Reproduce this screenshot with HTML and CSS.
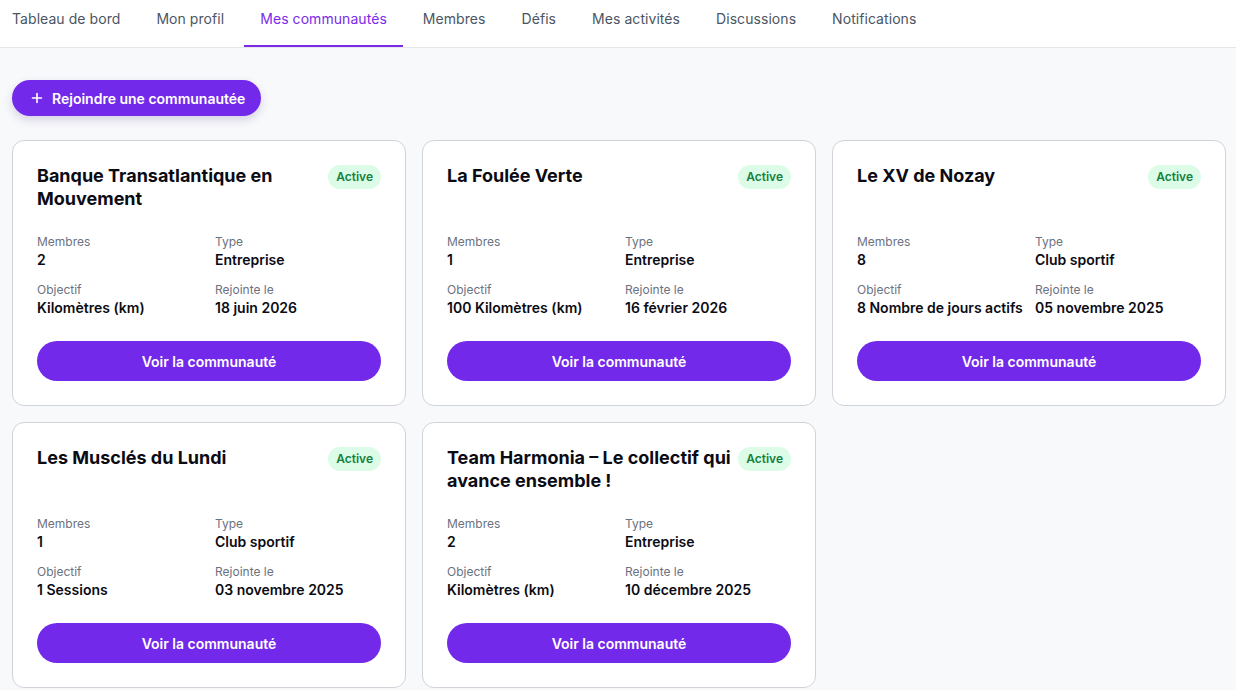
FILE: index.html
```html
<!DOCTYPE html>
<html lang="fr">
<head>
  <meta charset="UTF-8" />
  <meta name="viewport" content="width=device-width, initial-scale=1.0" />
  <title>Mes communautés</title>
  <link rel="stylesheet" href="styles.css">
</head>
<body>
  <nav class="tabs">
    <a class="tab">Tableau de bord</a>
    <a class="tab">Mon profil</a>
    <a class="tab active">Mes communautés</a>
    <a class="tab">Membres</a>
    <a class="tab">Défis</a>
    <a class="tab">Mes activités</a>
    <a class="tab">Discussions</a>
    <a class="tab">Notifications</a>
  </nav>

  <main class="page">
    <button class="join-btn">
      <svg width="12" height="12" viewBox="0 0 12 12" fill="none" stroke="currentColor" stroke-width="1.6" stroke-linecap="round">
        <path d="M6 1.5v9M1.5 6h9" />
      </svg>
      Rejoindre une communautée
    </button>

    <div class="grid">
      <div class="card">
        <div class="card-head">
          <h2>Banque Transatlantique en Mouvement</h2>
          <span class="badge">Active</span>
        </div>
        <dl class="info">
          <div><dt>Membres</dt><dd>2</dd></div>
          <div><dt>Type</dt><dd>Entreprise</dd></div>
          <div><dt>Objectif</dt><dd>Kilomètres (km)</dd></div>
          <div><dt>Rejointe le</dt><dd>18 juin 2026</dd></div>
        </dl>
        <button class="view-btn">Voir la communauté</button>
      </div>

      <div class="card">
        <div class="card-head">
          <h2>La Foulée Verte</h2>
          <span class="badge">Active</span>
        </div>
        <dl class="info">
          <div><dt>Membres</dt><dd>1</dd></div>
          <div><dt>Type</dt><dd>Entreprise</dd></div>
          <div><dt>Objectif</dt><dd>100 Kilomètres (km)</dd></div>
          <div><dt>Rejointe le</dt><dd>16 février 2026</dd></div>
        </dl>
        <button class="view-btn">Voir la communauté</button>
      </div>

      <div class="card">
        <div class="card-head">
          <h2>Le XV de Nozay</h2>
          <span class="badge">Active</span>
        </div>
        <dl class="info">
          <div><dt>Membres</dt><dd>8</dd></div>
          <div><dt>Type</dt><dd>Club sportif</dd></div>
          <div><dt>Objectif</dt><dd>8 Nombre de jours actifs</dd></div>
          <div><dt>Rejointe le</dt><dd>05 novembre 2025</dd></div>
        </dl>
        <button class="view-btn">Voir la communauté</button>
      </div>

      <div class="card">
        <div class="card-head">
          <h2>Les Musclés du Lundi</h2>
          <span class="badge">Active</span>
        </div>
        <dl class="info">
          <div><dt>Membres</dt><dd>1</dd></div>
          <div><dt>Type</dt><dd>Club sportif</dd></div>
          <div><dt>Objectif</dt><dd>1 Sessions</dd></div>
          <div><dt>Rejointe le</dt><dd>03 novembre 2025</dd></div>
        </dl>
        <button class="view-btn">Voir la communauté</button>
      </div>

      <div class="card">
        <div class="card-head">
          <h2>Team Harmonia – Le collectif qui avance ensemble !</h2>
          <span class="badge">Active</span>
        </div>
        <dl class="info">
          <div><dt>Membres</dt><dd>2</dd></div>
          <div><dt>Type</dt><dd>Entreprise</dd></div>
          <div><dt>Objectif</dt><dd>Kilomètres (km)</dd></div>
          <div><dt>Rejointe le</dt><dd>10 décembre 2025</dd></div>
        </dl>
        <button class="view-btn">Voir la communauté</button>
      </div>
    </div>
  </main>
</body>
</html>
```

FILE: styles.css
```css
body {
  margin: 0;
  font-family: 'Inter', 'Noto Sans', sans-serif;
  background: #f8f9fb;
  color: #111118;
}
.tabs {
  display: flex;
  gap: 4px;
  padding-left: 12px;
  background: #fff;
  border-bottom: 1px solid #e5e7eb;
  height: 47px;
}
.tab {
  padding: 9px 16px 0;
  font-size: 14px;
  line-height: 20px;
  letter-spacing: 0.06px;
  color: #4b5563;
  border-bottom: 2px solid transparent;
  white-space: nowrap;
  cursor: pointer;
}
.tab:first-child {
  padding-left: 0;
}
.tab.active {
  color: #7c2ae8;
  border-bottom-color: #7c2ae8;
}
.page {
  padding: 32px 10px 0 12px;
}
.join-btn {
  display: flex;
  align-items: center;
  gap: 9px;
  height: 36px;
  padding: 0 16px 0 19px;
  border: none;
  border-radius: 18px;
  background: #7229ea;
  color: #fff;
  font-family: inherit;
  font-size: 14px;
  font-weight: 600;
  box-shadow: 0 4px 10px rgba(60, 40, 120, 0.18);
  cursor: pointer;
}
.grid {
  display: grid;
  grid-template-columns: repeat(3, 1fr);
  gap: 16px;
  margin-top: 24px;
}
.card {
  background: #fff;
  border: 1px solid #d1d3da;
  border-radius: 12px;
  padding: 23px 24px 24px;
}
.card-head {
  display: flex;
  justify-content: space-between;
  align-items: flex-start;
  gap: 4px;
  min-height: 46px;
}
.card-head h2 {
  flex: 1;
  margin: 0;
  font-size: 18px;
  line-height: 23px;
  font-weight: 700;
  color: #0b0b14;
}
.badge {
  flex-shrink: 0;
  margin-top: 1px;
  padding: 0 8px;
  height: 24px;
  line-height: 24px;
  border-radius: 12px;
  background: #dcfce7;
  color: #15803d;
  font-size: 12px;
  font-weight: 600;
}
.info {
  display: grid;
  grid-template-columns: 1fr 1fr;
  gap: 12px;
  margin: 24px 0 0;
}
.info dt {
  font-size: 12px;
  line-height: 16px;
  color: #6b7280;
}
.info dd {
  margin: 0;
  font-size: 14px;
  line-height: 20px;
  font-weight: 600;
  color: #0b0b14;
}
.view-btn {
  display: block;
  width: 100%;
  height: 40px;
  margin-top: 23px;
  border: none;
  border-radius: 20px;
  background: #7229ea;
  color: #fff;
  font-family: inherit;
  font-size: 14px;
  font-weight: 600;
  cursor: pointer;
}
```
